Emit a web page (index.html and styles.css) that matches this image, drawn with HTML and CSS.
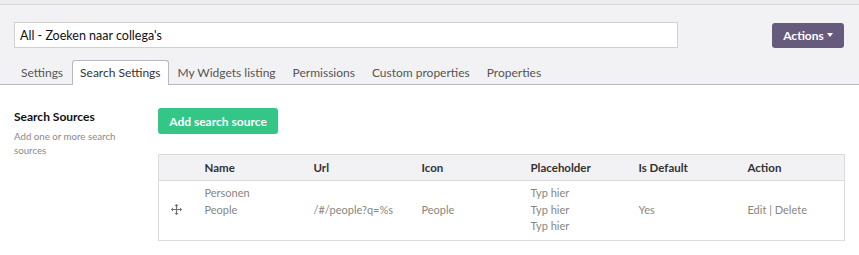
FILE: index.html
```html
<!doctype html>
<html lang="nl">
<head>
  <meta charset="utf-8" />
  <title>Search Settings</title>
  <link rel="stylesheet" href="styles.css">
</head>
<body>
  <div class="topstrip"></div>

  <header class="page-head">
    <div class="title-row">
      <input class="title-input" type="text" value="All - Zoeken naar collega's">
      <button class="actions-btn">Actions <span class="caret"></span></button>
    </div>
    <nav class="tabs">
      <a class="tab">Settings</a>
      <a class="tab active">Search Settings</a>
      <a class="tab">My Widgets listing</a>
      <a class="tab">Permissions</a>
      <a class="tab">Custom properties</a>
      <a class="tab">Properties</a>
    </nav>
  </header>

  <main class="content">
    <aside class="side">
      <h3>Search Sources</h3>
      <p>Add one or more search sources</p>
    </aside>

    <section class="main">
      <button class="add-btn">Add search source</button>

      <table class="sources">
        <colgroup>
          <col class="c-handle">
          <col class="c-wide"><col><col class="c-wide"><col><col class="c-wide"><col class="c-last">
        </colgroup>
        <thead>
          <tr>
            <th></th>
            <th>Name</th>
            <th>Url</th>
            <th>Icon</th>
            <th>Placeholder</th>
            <th>Is Default</th>
            <th>Action</th>
          </tr>
        </thead>
        <tbody>
          <tr>
            <td class="handle">
              <svg width="11" height="11" viewBox="0 0 11 11">
                <path d="M5.5 0.5v10M0.5 5.5h10" stroke="#6f6f6f" stroke-width="1.2" fill="none"/>
                <path d="M5.5 0l-2 2h4zM5.5 11l-2-2h4zM0 5.5l2-2v4zM11 5.5l-2-2v4z" fill="#6f6f6f"/>
              </svg>
            </td>
            <td class="top">Personen<br>People</td>
            <td>/#/people?q=%s</td>
            <td>People</td>
            <td>Typ hier<br>Typ hier<br>Typ hier</td>
            <td>Yes</td>
            <td>Edit | Delete</td>
          </tr>
        </tbody>
      </table>
    </section>
  </main>
</body>
</html>
```

FILE: styles.css
```css
body {
  margin: 0;
  background: #fff;
  font-family: Lato, "Open Sans", sans-serif;
  color: #333;
}

.topstrip {
  height: 4px;
  background: #ececed;
  border-bottom: 1px solid #d6d6d8;
}

.page-head {
  background: #f2f2f4;
  border-bottom: 1px solid #b9b6c6;
  padding: 17px 15px 0 14px;
}

.title-row {
  display: flex;
  align-items: center;
  justify-content: space-between;
}

.title-input {
  box-sizing: border-box;
  width: 664px;
  height: 26px;
  border: 1px solid #d0d0d2;
  background: #fff;
  padding: 0 5px;
  font-family: Lato, sans-serif;
  font-size: 12.5px;
  color: #111;
  outline: none;
}

.actions-btn {
  box-sizing: border-box;
  width: 72px;
  height: 25px;
  border: 0;
  border-radius: 3px;
  background: #665b7d;
  color: #fff;
  font-family: Lato, sans-serif;
  font-weight: bold;
  font-size: 12px;
  padding: 0;
  display: flex;
  align-items: center;
  justify-content: center;
  gap: 3px;
}

.caret {
  width: 0;
  height: 0;
  border-left: 3.5px solid transparent;
  border-right: 3.5px solid transparent;
  border-top: 4px solid #fff;
}

.tabs {
  display: flex;
  margin-top: 12px;
  margin-left: -1px;
  gap: 1px;
}

.tab {
  font-size: 12px;
  color: #555;
  padding: 0 7px;
  height: 23px;
  line-height: 24px;
  border: 1px solid transparent;
  border-bottom: 0;
  border-radius: 3px 3px 0 0;
  margin-bottom: -1px;
}

.tab.active {
  background: #fff;
  border-color: #b9b6c6;
  color: #333;
  height: 24px;
}

.content {
  display: flex;
  padding: 23px 15px 0 14px;
}

.side {
  width: 144px;
  flex: none;
}

.side h3 {
  margin: 1px 0 0;
  font-size: 12px;
  line-height: 16px;
  font-weight: bold;
  color: #111;
}

.side p {
  margin: 4px 0 0;
  width: 110px;
  font-size: 9.7px;
  line-height: 14px;
  color: #8a8a8a;
}

.main {
  flex: 1;
}

.add-btn {
  display: block;
  height: 26px;
  width: 120px;
  border: 0;
  border-radius: 3px;
  background: #33c687;
  color: #fff;
  font-family: Lato, sans-serif;
  font-weight: bold;
  font-size: 12px;
  padding: 0;
}

.sources {
  margin-top: 20px;
  width: 686px;
  table-layout: fixed;
  border-collapse: collapse;
  border: 1px solid #dcdcdc;
  font-size: 11px;
}

.sources col {
  width: 108px;
}

.sources col.c-wide {
  width: 109px;
}

.sources col.c-last {
  width: 105px;
}

.sources col.c-handle {
  width: 38px;
}

.sources th {
  background: #f2f2f4;
  text-align: left;
  font-weight: bold;
  font-size: 11.5px;
  color: #333;
  height: 25px;
  line-height: 14px;
  padding: 0 8px;
  border-bottom: 1px solid #dcdcdc;
}

.sources td {
  color: #878780;
  line-height: 16.5px;
  padding: 4px 8px 5px;
  vertical-align: middle;
}

.sources td.top {
  vertical-align: top;
}

.sources td.handle {
  padding-left: 12px;
  padding-top: 6px;
}
```
